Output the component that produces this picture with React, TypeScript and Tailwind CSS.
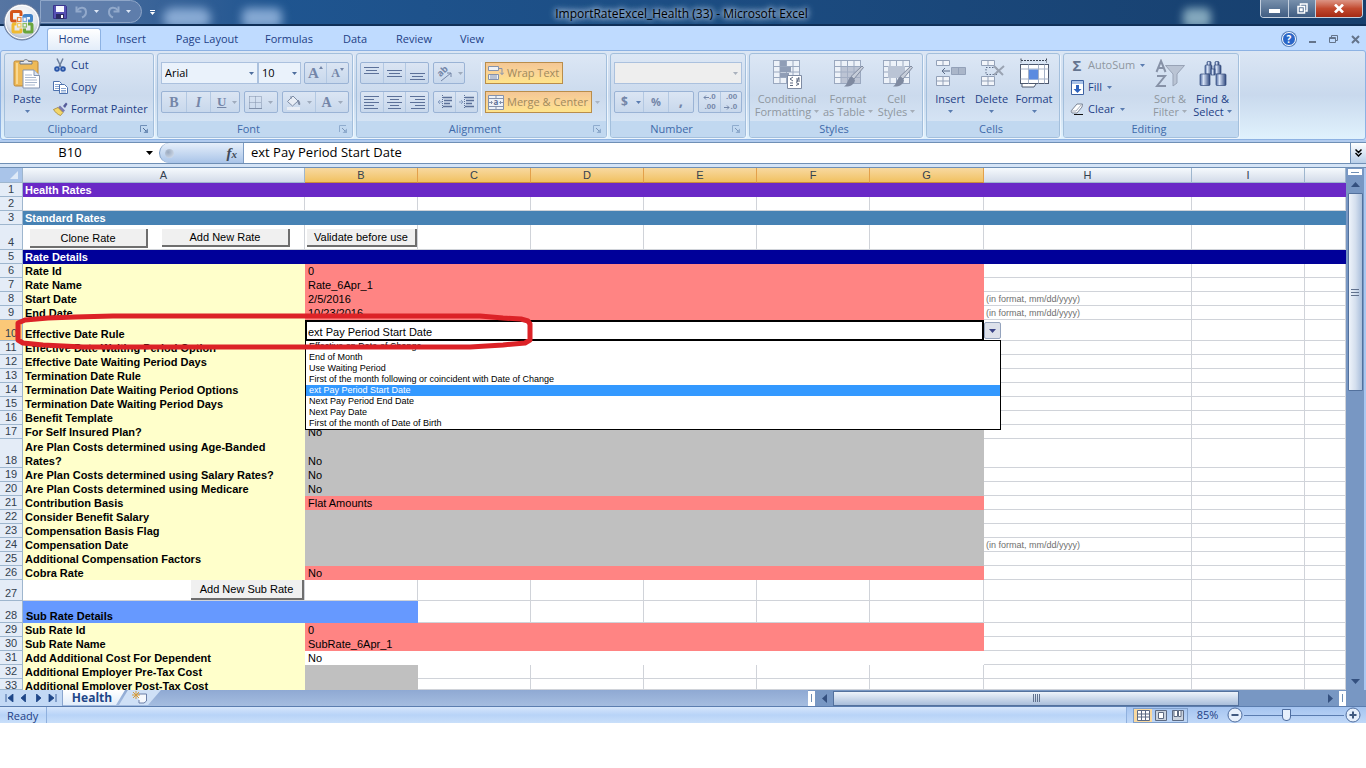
import type { ReactNode } from "react";
import clsx from "clsx";

type Row = {
    n: number
    kind: "banner" | "blank" | "field" | "sub" | "rateButtons" | "subButton" | "subHeader" | "active"
    h?: string
    label?: string
    value?: string
    fill?: string
    note?: string
}

const RED = "bg-[#ff8483]";
const GRAY = "bg-[#c0c0c0]";
const DATE_NOTE = "(in format, mm/dd/yyyy)";

const rows: Row[] = [
    { n: 1, kind: "banner", label: "Health Rates", fill: "bg-[#6a29c6]" },
    { n: 2, kind: "blank" },
    { n: 3, kind: "banner", label: "Standard Rates", fill: "bg-[#4782b4]" },
    { n: 4, kind: "rateButtons", h: "h-[25px]" },
    { n: 5, kind: "banner", label: "Rate Details", fill: "bg-[#000099]" },
    { n: 6, kind: "field", label: "Rate Id", value: "0", fill: RED },
    { n: 7, kind: "field", label: "Rate Name", value: "Rate_6Apr_1", fill: RED },
    { n: 8, kind: "field", label: "Start Date", value: "2/5/2016", fill: RED, note: DATE_NOTE },
    { n: 9, kind: "field", label: "End Date", value: "10/23/2016", fill: RED, note: DATE_NOTE },
    { n: 10, kind: "active", label: "Effective Date Rule", value: "ext Pay Period Start Date", h: "h-[21px]" },
    { n: 11, kind: "field", label: "Effective Date Waiting Period Option", fill: GRAY },
    { n: 12, kind: "field", label: "Effective Date Waiting Period Days", fill: GRAY },
    { n: 13, kind: "field", label: "Termination Date Rule", fill: GRAY },
    { n: 14, kind: "field", label: "Termination Date Waiting Period Options", fill: GRAY },
    { n: 15, kind: "field", label: "Termination Date Waiting Period Days", fill: GRAY },
    { n: 16, kind: "field", label: "Benefit Template", fill: GRAY },
    { n: 17, kind: "field", label: "For Self Insured Plan?", value: "No", fill: GRAY },
    { n: 18, kind: "field", label: "Are Plan Costs determined using Age-Banded Rates?", value: "No", fill: GRAY, h: "h-[29px]" },
    { n: 19, kind: "field", label: "Are Plan Costs determined using Salary Rates?", value: "No", fill: GRAY },
    { n: 20, kind: "field", label: "Are Plan Costs determined using Medicare", value: "No", fill: GRAY },
    { n: 21, kind: "field", label: "Contribution Basis", value: "Flat Amounts", fill: RED },
    { n: 22, kind: "field", label: "Consider Benefit Salary", fill: GRAY },
    { n: 23, kind: "field", label: "Compensation Basis Flag", fill: GRAY },
    { n: 24, kind: "field", label: "Compensation Date", fill: GRAY, note: DATE_NOTE },
    { n: 25, kind: "field", label: "Additional Compensation Factors", fill: GRAY },
    { n: 26, kind: "field", label: "Cobra Rate", value: "No", fill: RED },
    { n: 27, kind: "subButton", h: "h-[21px]" },
    { n: 28, kind: "subHeader", label: "Sub Rate Details", h: "h-[22px]" },
    { n: 29, kind: "field", label: "Sub Rate Id", value: "0", fill: RED },
    { n: 30, kind: "field", label: "Sub Rate Name", value: "SubRate_6Apr_1", fill: RED },
    { n: 31, kind: "field", label: "Add Additional Cost For Dependent", value: "No", fill: "bg-white" },
    { n: 32, kind: "sub", label: "Additional Employer Pre-Tax Cost" },
    { n: 33, kind: "sub", label: "Additional Employer Post-Tax Cost", h: "h-[11px]" },
];

const ruleOptions = [
    "Effective on Date of Change",
    "End of Month",
    "Use Waiting Period",
    "First of the month following or coincident with Date of Change",
    "ext Pay Period Start Date",
    "Next Pay Period End Date",
    "Next Pay Date",
    "First of the month of Date of Birth",
];

const columns = ["A", "B", "C", "D", "E", "F", "G", "H", "I", ""];

const tabs = [
    { label: "Home", width: "w-[54px]" },
    { label: "Insert", width: "w-[60px]" },
    { label: "Page Layout", width: "w-[92px]" },
    { label: "Formulas", width: "w-[72px]" },
    { label: "Data", width: "w-[60px]" },
    { label: "Review", width: "w-[58px]" },
    { label: "View", width: "w-[58px]" },
];

/* ---------- small shared pieces ---------- */

const Caret = ({ className = "text-[#5a7cb0]" }: { className?: string }) => (
    <svg viewBox="0 0 5 3" className={clsx("h-[3px] w-[5px] shrink-0", className)} aria-hidden="true">
        <path d="M0 0h5L2.500 3z" fill="currentColor" />
    </svg>
)

const Launcher = ({ faded }: { faded?: boolean }) => (
    <svg viewBox="0 0 9 9" className={clsx("h-[9px] w-[9px]", faded ? "opacity-60" : "")} fill="none" stroke="#6f8fb8" aria-hidden="true">
        <path d="M.5 7V.5H7" />
        <path d="M3 3l4 4" stroke="#4c6a96" />
        <path d="M8 3.500V8H3.500z" fill="#6f8fb8" stroke="none" />
    </svg>
)

const Group = ({ title, width, launcher, children }: { title: string; width: string; launcher?: "on" | "off"; children: ReactNode }) => (
    <section aria-label={title} className={clsx("flex h-[85px] shrink-0 flex-col overflow-hidden rounded-[3px] border border-[#a3bfdc] bg-linear-to-b from-[#dce7f5] via-[#cbdaed] to-[#dbe9f8] shadow-[1px_1px_0_#eef5fd]", width)}>
        <div className="flex-1 px-[3px]">{children}</div>
        <div className="flex h-4 items-center bg-[#c1d8f0] pr-1 text-[#3e6aaa]">
            <span className="flex-1 text-center">{title}</span>
            {launcher && <button aria-label={`${title} options`}><Launcher faded={launcher === "off"} /></button>}
        </div>
    </section>
)

const ButtonBar = ({ width, children }: { width: string; children: ReactNode }) => (
    <div className={clsx("flex h-[22px] divide-x divide-[#b3c8e2] rounded-[2px] border border-[#9ab3d5] bg-linear-to-b from-[#dbe5f3] to-[#c8d8ec]", width)}>
        {children}
    </div>
)

const Tool = ({ label, children, className }: { label: string; children: ReactNode; className?: string }) => (
    <button aria-label={label} className={clsx("flex flex-1 items-center justify-center gap-[6px] text-[#7486a8]", className)}>{children}</button>
)

const Lines = ({ rowsAt }: { rowsAt: [number, number, number][] }) => (
    <svg viewBox="0 0 15 14" className="h-[14px] w-[15px]" stroke="#5c7199" strokeWidth="1" aria-hidden="true">
        {rowsAt.map(([y, x1, x2]) => <path key={y} d={`M${x1} ${y}H${x2}`} />)}
    </svg>
)

const BigButton = ({ icon, lines, width, disabled }: { icon: ReactNode; lines: string[]; width: string; disabled?: boolean }) => (
    <button className={clsx("flex flex-col items-center", width, disabled ? "text-[#8f979f]" : "text-[#1e3f86]")}>
        <span className="flex h-9 items-center">{icon}</span>
        <span className="leading-[13px] whitespace-nowrap">{lines[0]}</span>
        <span className="flex h-[13px] items-center gap-[3px] leading-[13px] whitespace-nowrap">
            {lines[1]}
            <Caret className={disabled ? "text-[#a5adb8]" : "text-[#5a7cb0]"} />
        </span>
    </button>
)

const SmallButton = ({ icon, label, caret, disabled }: { icon: ReactNode; label: string; caret?: boolean; disabled?: boolean }) => (
    <button className={clsx("flex h-[22px] items-center gap-[3px] whitespace-nowrap", disabled ? "text-[#8f979f]" : "text-[#1e3f86]")}>
        <span className="flex w-4 justify-center">{icon}</span>
        {label}
        {caret && <span className="pl-[2px]"><Caret /></span>}
    </button>
)

/* ---------- icons ---------- */

const OfficeLogo = () => (
    <svg viewBox="0 0 38 38" className="h-[38px] w-[38px]" aria-hidden="true">
        <defs>
            <radialGradient id="orb" cx=".5" cy=".35" r=".65">
                <stop offset="0" stopColor="#ffffff" />
                <stop offset=".65" stopColor="#e1e5ed" />
                <stop offset="1" stopColor="#a4b0c4" />
            </radialGradient>
        </defs>
        <circle cx="19" cy="19" r="18" fill="url(#orb)" stroke="#64789b" />
        <circle cx="19" cy="19" r="16.500" fill="none" stroke="#fff" />
        <g fill="none" strokeWidth="3" strokeLinejoin="round">
            <path d="M13.500 18H10a1.500 1.500 0 0 1-1.500-1.500V10A1.500 1.500 0 0 1 10 8.500h6.500A1.500 1.500 0 0 1 18 10v3" stroke="#d4541b" />
            <path d="M21 15v-1.500a1 1 0 0 1 1-1h5.500a1 1 0 0 1 1 1V17a1 1 0 0 1-1 1H25" stroke="#4283c9" />
            <path d="M13.500 21H11a1 1 0 0 0-1 1v6a1 1 0 0 0 1 1h6a1 1 0 0 0 1-1v-2.500" stroke="#f0ba31" />
            <path d="M25 21h3a1 1 0 0 1 1 1v6a1 1 0 0 1-1 1h-5.500a1 1 0 0 1-1-1v-2.500" stroke="#6aa53c" />
        </g>
        <g fill="none" strokeWidth="1.200">
            <rect x="14.500" y="14.500" width="3.500" height="4" stroke="#e68139" />
            <rect x="20" y="14.500" width="3.500" height="4" stroke="#7ba7dc" />
            <rect x="14.500" y="20.500" width="3.500" height="3.500" stroke="#f0ca5f" />
            <rect x="20" y="20.500" width="3.500" height="3.500" stroke="#8dbe63" />
        </g>
    </svg>
)

const SaveIcon = () => (
    <svg viewBox="0 0 14 14" className="h-[14px] w-[14px]" aria-hidden="true">
        <path d="M.5.5h12l1 1v12H.5z" fill="#5650b4" stroke="#39358c" />
        <path d="M3 1h8v6H3z" fill="#f5f7ff" />
        <path d="M3 9h8v5H3z" fill="#2b2a63" />
        <path d="M8 10h2v3H8z" fill="#fff" />
    </svg>
)

const ArcArrow = ({ flip }: { flip?: boolean }) => (
    <svg viewBox="0 0 13 14" className={clsx("h-[14px] w-[13px]", flip && "-scale-x-100")} fill="none" stroke="#92a9cb" strokeWidth="2" aria-hidden="true">
        <path d="M2 5.500C5 1.500 10.500 2 11 6.500c.2 3-1.500 5-4 6" />
        <path d="M1.500 1.500v5h5" />
    </svg>
)

const PasteIcon = () => (
    <svg viewBox="0 0 28 32" className="h-8 w-7" aria-hidden="true">
        <rect x="1" y="3" width="24" height="25" rx="1.500" fill="#eeba57" stroke="#bb873a" />
        <path d="M3 5h2v21H3z" fill="#f9d892" />
        <path d="M7 6V3.500h3.500C11 1 15 1 15.500 3.500H19V6z" fill="#e4e8ee" stroke="#6d7684" />
        <path d="M10 12h11l5.500 5.500V30H10z" fill="#fff" stroke="#8595b0" />
        <path d="M21 12v5.500h5.500" fill="#dbe4f1" stroke="#8595b0" />
        <path d="M12 17h7M12 19.500h11M12 22h12M12 24.500h12M12 27h10" stroke="#a9b7cd" />
    </svg>
)

const CutIcon = () => (
    <svg viewBox="0 0 12 14" className="h-[14px] w-3" fill="none" aria-hidden="true">
        <path d="M3 .5l4 8.500M9 .5L5 9" stroke="#6d7f9c" strokeWidth="1.500" />
        <circle cx="3" cy="11" r="1.800" stroke="#2c57a8" strokeWidth="2" />
        <circle cx="9" cy="11" r="1.800" stroke="#2c57a8" strokeWidth="2" />
    </svg>
)

const CopyIcon = () => (
    <svg viewBox="0 0 15 13" className="h-[13px] w-[15px]" stroke="#4d72ae" aria-hidden="true">
        <path d="M.5.5h6l2 2v7h-8z" fill="#fff" />
        <path d="M2 3.500h4M2 5.500h4M2 7.500h4" stroke="#8aa7d3" />
        <path d="M6.500 3.500h5l3 3v6h-8z" fill="#fff" />
        <path d="M8 7.500h5M8 9.500h5M8 11h5" stroke="#8aa7d3" />
    </svg>
)

const PainterIcon = () => (
    <svg viewBox="0 0 15 14" className="h-[14px] w-[15px]" aria-hidden="true">
        <path d="M10 4l3-3.500 1.500 1.500L12 6z" fill="#555b99" />
        <path d="M7 3.500l5 5-2 2L5 5.500z" fill="#7b7bb1" />
        <path d="M5 5.500l5 5-2.500 3C4.500 12.500 2 10 .5 7.500z" fill="#f3d66a" stroke="#9b7c26" strokeWidth=".7" />
    </svg>
)

const SheetGrid = ({ children }: { children?: ReactNode }) => (
    <svg viewBox="0 0 32 32" className="h-8 w-8" fill="none" aria-hidden="true">
        <rect x="2.500" y="2.500" width="26" height="23" fill="#edf2f9" stroke="#9aa8bf" />
        <path d="M9 2.500v23M15.500 2.500v23M22 2.500v23M2.500 8.500h26M2.500 14h26M2.500 19.500h26" stroke="#9aa8bf" />
        {children}
    </svg>
)

const Brush = () => (
    <g>
        <path d="M30 8l1.500 1.500L22 21l-3-2.500z" fill="#c6cdd9" stroke="#808ba0" />
        <path d="M19 18.500l4 3.500c-1 5-5 7-11 6.500 4-2 3-7 7-10z" fill="#7f8aa0" />
    </g>
)

const InsertIcon = () => (
    <svg viewBox="0 0 32 32" className="h-8 w-8" fill="#f2f5fa" stroke="#93a1b8" aria-hidden="true">
        <path d="M2.500 2.500h13v5h-13zM9 2.500v5M2.500 18.500h13v9h-13zM9 18.500v9M2.500 23h13" />
        <path d="M17.500 9.500h14v7h-14zM24.500 9.500v7" fill="#aab6c9" />
        <path d="M16 13H8M11 10l-3 3 3 3" fill="none" stroke="#5c6c88" />
    </svg>
)

const DeleteIcon = () => (
    <svg viewBox="0 0 32 32" className="h-8 w-8" fill="#f2f5fa" stroke="#93a1b8" aria-hidden="true">
        <path d="M5.500 2.500h13v5h-13zM12 2.500v5M5.500 18.500h13v9h-13zM12 18.500v9M5.500 23h13" />
        <path d="M10 9.500h11v7H10z" fill="none" strokeDasharray="1.500 1.500" stroke="#5c6c88" />
        <path d="M18 8l9 9M28 8l-10 9" stroke="#9aa3b2" strokeWidth="2" />
    </svg>
)

const FormatIcon = () => (
    <svg viewBox="0 0 32 32" className="h-8 w-8" fill="none" aria-hidden="true">
        <path d="M3 2.500h25M3 .5v4M28.500.5v4" stroke="#3b4454" strokeDasharray="2 1" />
        <rect x="2.500" y="6.500" width="28" height="19" fill="#fff" stroke="#4e5a70" />
        <path d="M10.500 6.500v19M20.500 6.500v19M26.500 6.500v19M2.500 11h28M2.500 21h28" stroke="#a5b1c6" />
        <path d="M11 11.500h9v10h-9z" fill="#5b8be0" />
        <path d="M4 26v3h12l2-3" fill="#fff" stroke="#4e5a70" />
    </svg>
)

const BinocularsIcon = () => (
    <svg viewBox="0 0 28 26" className="h-[26px] w-7" aria-hidden="true">
        <defs>
            <linearGradient id="barrel">
                <stop offset="0" stopColor="#47649c" />
                <stop offset=".35" stopColor="#d6e2f6" />
                <stop offset="1" stopColor="#2b447a" />
            </linearGradient>
        </defs>
        <g fill="url(#barrel)" stroke="#334c7c" strokeWidth=".7">
            <rect x="8" y=".5" width="4" height="4" rx="1" />
            <rect x="16" y=".5" width="4" height="4" rx="1" />
            <rect x="6" y="4" width="7" height="9" rx="1" />
            <rect x="15" y="4" width="7" height="9" rx="1" />
            <rect x="12" y="8" width="4" height="6" />
            <rect x="1" y="13" width="10" height="11.500" rx="1" />
            <rect x="17" y="13" width="10" height="11.500" rx="1" />
        </g>
    </svg>
)

const SortIcon = () => (
    <svg viewBox="0 0 30 30" className="h-[30px] w-[30px]" fill="none" stroke="#8792a7" aria-hidden="true">
        <path d="M10.500 6.500h19L22 15v9l-4 3V15z" fill="#bac4d4" stroke="#98a3b6" />
        <path d="M1.500 13L6 2l4.500 11M3 9h6" strokeWidth="2" />
        <path d="M2 17h8L2 27h9" strokeWidth="2" />
    </svg>
)

/* ---------- title bar and tabs ---------- */

const TitleBar = () => (
    <header className="relative flex h-[26px] items-start overflow-hidden border-b-2 border-[#0f2f57] bg-linear-to-r from-[#5675a2] via-[#1f5590] via-20% to-[#173f6d]">
        <div className="ml-[40px] flex h-[23px] w-[102px] items-center gap-[8px] rounded-r-full border border-[#8fa6c8] bg-[#6c88b2]/70 pl-3">
            <button aria-label="Save"><SaveIcon /></button>
            <button aria-label="Undo" className="flex items-center gap-[6px]"><ArcArrow /><Caret className="text-[#dce6f5]" /></button>
            <button aria-label="Redo" className="flex items-center gap-[6px]"><ArcArrow flip /><Caret className="text-[#dce6f5]" /></button>
        </div>
        <button aria-label="Customize toolbar" className="ml-2 flex h-6 flex-col items-center justify-center gap-[1px]">
            <span className="h-px w-[5px] bg-white" />
            <Caret className="text-white" />
        </button>
        {/* desktop icons glowing through the glass */}
        <div className="absolute top-2 left-[163px] h-5 w-12 rounded-full bg-[#9dbde3]/80 blur-[5px]" />
        <div className="absolute top-2 left-[242px] h-5 w-10 rounded-md bg-[#9dbde3]/80 blur-[5px]" />
        <div className="absolute top-2 right-[155px] h-5 w-7 rounded-md bg-[#9dc0cf]/80 blur-[4px]" />
        <h1 className="flex-1 pt-[5px] pr-[52px] text-center text-[12px] leading-[18px] text-black [text-shadow:0_0_5px_#c5d6ec,0_0_7px_#b9cde6,0_0_9px_#9db8da]">
            ImportRateExcel_Health (33) - Microsoft Excel
        </h1>
        <div className="mr-[3px] flex h-[18px] divide-x divide-[#c3cfde] overflow-hidden rounded-b-[4px] border border-t-0 border-[#c3cfde]">
            <button aria-label="Minimize" className="flex w-7 items-center justify-center bg-linear-to-b from-[#7890ac] to-[#405d82]">
                <span className="mt-1 h-1 w-[11px] bg-white" />
            </button>
            <button aria-label="Restore" className="flex w-[27px] items-center justify-center bg-linear-to-b from-[#7890ac] to-[#405d82]">
                <svg viewBox="0 0 11 11" className="h-[11px] w-[11px]" fill="none" stroke="#fff" strokeWidth="1.500" aria-hidden="true">
                    <path d="M3.500 2.500V1H10v7H8.500M1 3.500h6.500V10H1zM3.500 6h1.500v1.500H3.500z" />
                </svg>
            </button>
            <button aria-label="Close" className="flex w-[46px] items-center justify-center bg-linear-to-b from-[#dc9484] via-[#c24a2f] to-[#a52a14]">
                <svg viewBox="0 0 10 9" className="h-[9px] w-[10px]" stroke="#fff" strokeWidth="2.600" aria-hidden="true"><path d="M1 .5l8 8M9 .5l-8 8" /></svg>
            </button>
        </div>
    </header>
)

const TabRow = () => (
    <nav className="flex h-[24px] items-end bg-[#bfdbff] pr-1 pl-[47px]" aria-label="Ribbon tabs">
        {tabs.map(({ label, width }) => (
            <button
                key={label}
                className={clsx("h-[22px] whitespace-nowrap text-[#1e3f86]", width, label === "Home" && "rounded-t-[3px] border border-b-0 border-[#8db2e3] bg-linear-to-b from-white to-[#e3edf9]")}
            >
                {label}
            </button>
        ))}
        <div className="ml-auto flex h-[22px] items-center gap-[13px] pr-[2px]">
            <button aria-label="Help" className="flex h-[14px] w-[14px] items-center justify-center rounded-full border border-white bg-[#2a66c8] text-[10px] font-bold text-white ring-1 ring-[#5b83bd]">?</button>
            <button aria-label="Minimize workbook"><span className="mt-[6px] block h-[2px] w-[7px] bg-[#64748b]" /></button>
            <button aria-label="Restore workbook">
                <svg viewBox="0 0 9 8" className="h-2 w-[9px]" fill="none" stroke="#64748b" aria-hidden="true"><path d="M2.500 2V.5h6v5H7M.5 2.500h6v5h-6zM.5 3.500h6" /></svg>
            </button>
            <button aria-label="Close workbook">
                <svg viewBox="0 0 9 9" className="h-[9px] w-[9px]" stroke="#64748b" strokeWidth="2" aria-hidden="true"><path d="M1 1l7 7M8 1L1 8" /></svg>
            </button>
        </div>
    </nav>
)

/* ---------- ribbon ---------- */

const selectBase = "h-[22px] appearance-none border border-[#abc1de] pl-[3px] text-[11px] text-black";

const PickList = ({ label, value, width, muted }: { label: string; value: string; width: string; muted?: boolean }) => (
    <div className={clsx("grid items-center", width)}>
        <select aria-label={label} className={clsx(selectBase, "col-start-1 row-start-1 w-full", muted ? "bg-[#eeeeee]" : "bg-[#eaf2fb]")}>
            <option>{value}</option>
        </select>
        <span className="pointer-events-none col-start-1 row-start-1 mr-1 justify-self-end">
            <Caret className={muted ? "text-[#a9b1bd]" : "text-[#4d6d9d]"} />
        </span>
    </div>
)

const activeTool = "flex h-[22px] items-center gap-[3px] border border-[#b98d4b] bg-linear-to-b from-[#f4c795] via-[#fbd596] to-[#fee48a] pl-[2px] whitespace-nowrap";

const Ribbon = () => (
    <div className="flex h-[90px] gap-[3px] rounded-[3px] border border-[#8db2e3] bg-linear-to-b from-[#dbe6f4] via-[#c9d9ed] to-[#e0f2fd] px-[3px] pt-[2px]">
        <Group title="Clipboard" width="w-[150px]" launcher="on">
            <div className="flex">
                <div className="w-[40px] pt-[2px]">
                    <BigButton icon={<PasteIcon />} lines={["Paste", ""]} width="w-[38px]" />
                </div>
                <div className="flex flex-col pl-1">
                    <SmallButton icon={<CutIcon />} label="Cut" />
                    <SmallButton icon={<CopyIcon />} label="Copy" />
                    <SmallButton icon={<PainterIcon />} label="Format Painter" />
                </div>
            </div>
        </Group>

        <Group title="Font" width="w-[196px]" launcher="off">
            <div className="flex flex-col gap-[7px] pt-[8px]">
                <div className="flex">
                    <PickList label="Font" value="Arial" width="w-[97px]" />
                    <PickList label="Font size" value="10" width="w-[43px]" />
                    <div className="pl-[3px]">
                        <ButtonBar width="w-[45px]">
                            <Tool label="Grow font"><span className="flex font-[Liberation_Serif] text-[15px] font-bold">A<svg viewBox="0 0 4 3" className="mt-1 h-[3px] w-1" aria-hidden="true"><path d="M0 3h4L2 0z" fill="currentColor" /></svg></span></Tool>
                            <Tool label="Shrink font"><span className="flex font-[Liberation_Serif] text-[12px] font-bold">A<svg viewBox="0 0 4 3" className="mt-1 h-[3px] w-1" aria-hidden="true"><path d="M0 0h4L2 3z" fill="currentColor" /></svg></span></Tool>
                        </ButtonBar>
                    </div>
                </div>
                <div className="flex gap-1 font-[Liberation_Serif]">
                    <ButtonBar width="w-[79px]">
                        <Tool label="Bold"><b className="text-[14px]">B</b></Tool>
                        <Tool label="Italic"><i className="text-[14px] font-bold">I</i></Tool>
                        <Tool label="Underline" className="pl-1"><b className="text-[13px] underline">U</b><Caret className="text-[#9fabbd]" /></Tool>
                    </ButtonBar>
                    <ButtonBar width="w-[34px]">
                        <Tool label="Borders">
                            <svg viewBox="0 0 13 13" className="h-[13px] w-[13px]" stroke="#8090aa" fill="none" aria-hidden="true">
                                <path d="M.5.5h12v11M.5.5v11M6.500.5v11M.5 6.500h12" strokeDasharray="1 1" />
                                <path d="M0 12.500h13" />
                            </svg>
                            <Caret className="text-[#9fabbd]" />
                        </Tool>
                    </ButtonBar>
                    <ButtonBar width="w-[67px]">
                        <Tool label="Fill color">
                            <svg viewBox="0 0 15 15" className="h-[15px] w-[15px]" fill="#e8edf5" stroke="#7e8ca5" aria-hidden="true">
                                <path d="M1.500 6.500L7 1l5 5-5.500 5zM5 4V1" />
                                <path d="M12 5c2 2 2 4 1.500 5C12 9 12 7 12 5z" fill="#7e8ca5" />
                                <path d="M1 12h13v3H1z" stroke="none" />
                            </svg>
                            <Caret className="text-[#9fabbd]" />
                        </Tool>
                        <Tool label="Font color"><b className="text-[14px]">A</b><Caret className="text-[#9fabbd]" /></Tool>
                    </ButtonBar>
                </div>
            </div>
        </Group>

        <Group title="Alignment" width="w-[251px]" launcher="off">
            <div className="flex gap-[3px] pt-[8px]">
                <div className="flex w-[118px] flex-col gap-[7px]">
                    <div className="flex gap-1">
                        <ButtonBar width="w-[69px]">
                            <Tool label="Top align"><Lines rowsAt={[[1.5, 0, 15], [4.5, 2, 13], [7.5, 0, 15]]} /></Tool>
                            <Tool label="Middle align"><Lines rowsAt={[[4.5, 0, 15], [7.5, 2, 13], [10.5, 0, 15]]} /></Tool>
                            <Tool label="Bottom align"><Lines rowsAt={[[7.5, 0, 15], [10.5, 2, 13], [13.5, 0, 15]]} /></Tool>
                        </ButtonBar>
                        <ButtonBar width="w-[32px]">
                            <Tool label="Orientation" className="gap-[2px]">
                                <svg viewBox="0 0 17 17" className="h-[17px] w-[17px] overflow-visible" aria-hidden="true">
                                    <text x="3" y="10" fontSize="9" fontWeight="bold" fill="#7486a8" transform="rotate(-45 7 8)">ab</text>
                                    <path d="M6 16L16 8M16 12V8h-4" fill="none" stroke="#7486a8" />
                                </svg>
                                <Caret className="text-[#9fabbd]" />
                            </Tool>
                        </ButtonBar>
                    </div>
                    <div className="flex gap-1">
                        <ButtonBar width="w-[69px]">
                            <Tool label="Align left"><Lines rowsAt={[[1.5, 0, 15], [4.5, 0, 10], [7.5, 0, 15], [10.5, 0, 10], [13.5, 0, 14]]} /></Tool>
                            <Tool label="Center"><Lines rowsAt={[[1.5, 0, 15], [4.5, 3, 12], [7.5, 0, 15], [10.5, 3, 12], [13.5, 1, 14]]} /></Tool>
                            <Tool label="Align right"><Lines rowsAt={[[1.5, 0, 15], [4.5, 5, 15], [7.5, 0, 15], [10.5, 5, 15], [13.5, 1, 15]]} /></Tool>
                        </ButtonBar>
                        <ButtonBar width="w-[45px]">
                            <Tool label="Decrease indent">
                                <svg viewBox="0 0 16 14" className="h-[14px] w-4" fill="none" stroke="#5c7199" aria-hidden="true">
                                    <path d="M6 2.500h9M7 5.500h8M7 8.500h6M6 11.500h9" strokeWidth="1.500" /><path d="M5.500 0v14" strokeDasharray="1 1" /><path d="M5 7H1M3 5L1 7l2 2" stroke="#8aa0c3" />
                                </svg>
                            </Tool>
                            <Tool label="Increase indent">
                                <svg viewBox="0 0 16 14" className="h-[14px] w-4" fill="none" stroke="#5c7199" aria-hidden="true">
                                    <path d="M6 2.500h9M7 5.500h8M7 8.500h6M6 11.500h9" strokeWidth="1.500" /><path d="M5.500 0v14" strokeDasharray="1 1" /><path d="M0 7h4M2 5l2 2-2 2" stroke="#8aa0c3" />
                                </svg>
                            </Tool>
                        </ButtonBar>
                    </div>
                </div>
                <div className="h-[54px] w-px bg-[#f2f7fd]" />
                <div className="flex flex-col gap-[7px] text-[#a08a5c]">
                    <button className={clsx(activeTool, "w-[78px]")}>
                        <svg viewBox="0 0 16 16" className="h-4 w-4 shrink-0" fill="#eef2f8" stroke="#8592ac" aria-hidden="true">
                            <path d="M.5 1.500h10v4H.5zM.5 9.500h10v5H.5z" /><path d="M2 11h7M2 13h7M10 3.500h4v6l-2-2m2 2l2-2" fill="none" />
                        </svg>
                        Wrap Text
                    </button>
                    <div className="flex items-center gap-[3px]">
                        <button className={clsx(activeTool, "w-[107px]")}>
                            <svg viewBox="0 0 16 15" className="h-[15px] w-4 shrink-0" fill="#eef2f8" stroke="#8592ac" aria-hidden="true">
                                <path d="M.5.5h15v14H.5zM.5 3.500h15M.5 11.500h15M8 .5v3M8 11.500v3" /><path d="M1 7.500h3M15 7.500h-3M3 6l1.500 1.500L3 9M13 6l-1.500 1.500L13 9" fill="none" />
                                <text x="5.500" y="10" fontSize="8" fontWeight="bold" fill="#5c6f96" stroke="none">a</text>
                            </svg>
                            Merge &amp; Center
                        </button>
                        <Caret className="text-[#a9b4c4]" />
                    </div>
                </div>
            </div>
        </Group>

        <Group title="Number" width="w-[136px]" launcher="off">
            <div className="flex flex-col gap-[7px] pt-[8px]">
                <PickList label="Number format" value="" width="w-[128px]" muted />
                <div className="flex gap-1">
                    <ButtonBar width="w-[80px]">
                        <Tool label="Accounting format" className="gap-[8px] pl-1"><b className="text-[12px]">$</b><Caret /></Tool>
                        <Tool label="Percent"><b>%</b></Tool>
                        <Tool label="Comma style"><b className="pb-1 text-[15px]">,</b></Tool>
                    </ButtonBar>
                    <ButtonBar width="w-[44px]">
                        <Tool label="Increase decimal">
                            <span className="flex flex-col items-end font-[Liberation_Sans] text-[8px] leading-[10px] font-bold">
                                <span className="flex items-center">
                                    <svg viewBox="0 0 6 5" className="h-[5px] w-[6px]" fill="none" stroke="currentColor" aria-hidden="true"><path d="M6 2.500H1M3 .5l-2 2 2 2" /></svg>.0
                                </span>
                                <span>.00</span>
                            </span>
                        </Tool>
                        <Tool label="Decrease decimal">
                            <span className="flex flex-col items-end font-[Liberation_Sans] text-[8px] leading-[10px] font-bold">
                                <span>.00</span>
                                <span className="flex items-center">
                                    <svg viewBox="0 0 6 5" className="h-[5px] w-[6px]" fill="none" stroke="currentColor" aria-hidden="true"><path d="M0 2.500h5M3 .5l2 2-2 2" /></svg>.0
                                </span>
                            </span>
                        </Tool>
                    </ButtonBar>
                </div>
            </div>
        </Group>

        <Group title="Styles" width="w-[174px]">
            <div className="flex pt-[2px]">
                <BigButton disabled width="w-[68px]" lines={["Conditional", "Formatting"]} icon={
                    <SheetGrid><path d="M9 3h6v5H9zM9 9h11v5H9zM9 15h9v4H9z" fill="#8f9db6" /><path d="M16.500 17.500h14v13h-14z" fill="#fff" stroke="#7e8ba3" /><path d="M22 19l-3 2 3 2M19 25h3M19 27.500h3M25 21h4M25 23h4M28 19l-2 5M25 24.500l3 1.500-3 1.500" stroke="#5c6980" /></SheetGrid>
                } />
                <BigButton disabled width="w-[54px]" lines={["Format", "as Table"]} icon={<SheetGrid><path d="M9 9h19v16H9z" fill="#a6b1c5" fillOpacity=".7" /><Brush /></SheetGrid>} />
                <BigButton disabled width="w-[43px]" lines={["Cell", "Styles"]} icon={<SheetGrid><path d="M7 8h17v12H7z" fill="#bac4d5" /><Brush /></SheetGrid>} />
            </div>
        </Group>

        <Group title="Cells" width="w-[134px]">
            <div className="flex pt-[2px]">
                <BigButton width="w-[40px]" lines={["Insert", ""]} icon={<InsertIcon />} />
                <BigButton width="w-[43px]" lines={["Delete", ""]} icon={<DeleteIcon />} />
                <BigButton width="w-[42px]" lines={["Format", ""]} icon={<FormatIcon />} />
            </div>
        </Group>

        <Group title="Editing" width="w-[176px]">
            <div className="flex">
                <div className="flex w-[82px] flex-col pl-[2px]">
                    <SmallButton disabled caret label="AutoSum" icon={<span className="text-[15px] font-bold text-[#64748f]">Σ</span>} />
                    <SmallButton caret label="Fill" icon={
                        <svg viewBox="0 0 13 15" className="h-[15px] w-[13px]" aria-hidden="true"><path d="M.5.5h12v14H.5z" fill="#fff" stroke="#3d62a3" /><path d="M1 1h11v3H1z" fill="#a9c2e8" /><path d="M5 5h3v4h2.500l-4 4-4-4H5z" fill="#2d62bd" /></svg>
                    } />
                    <SmallButton caret label="Clear" icon={
                        <svg viewBox="0 0 14 12" className="h-3 w-[14px]" aria-hidden="true"><path d="M1 8l6-7h5.500L12 4l-5 6H2z" fill="#fff" stroke="#7b8596" /><path d="M1 8h5l6-7" fill="none" stroke="#a3acbb" /><path d="M4 11.500h9" stroke="#111" /></svg>
                    } />
                </div>
                <div className="flex pt-[2px]">
                    <BigButton disabled width="w-[42px]" lines={["Sort &", "Filter"]} icon={<SortIcon />} />
                    <BigButton width="w-[43px]" lines={["Find &", "Select"]} icon={<BinocularsIcon />} />
                </div>
            </div>
        </Group>
    </div>
)

/* ---------- formula bar ---------- */

const FormulaBar = () => (
    <div className="bg-[#b1cbee] pt-[2px]">
        <div className="flex h-[22px] border-y border-[#6f8fb5] bg-white text-[13px] text-black">
            <input aria-label="Name box" defaultValue="B10" className="w-[140px] text-center" />
            <button aria-label="Names" className="flex w-[19px] items-center justify-center">
                <svg viewBox="0 0 7 4" className="h-1 w-[7px]" aria-hidden="true"><path d="M0 0h7L3.500 4z" /></svg>
            </button>
            <div className="flex w-[85px] items-center justify-between rounded-l-full border-x border-[#7d9cc4] bg-linear-to-b from-[#e6effa] to-[#a9c4e8] pr-[6px] pl-[5px]">
                <span className="h-[9px] w-[9px] rounded-full bg-radial-[at_35%_35%] from-[#9aa9bf] to-[#dbe5f2]" />
                <button aria-label="Insert function" className="font-[Liberation_Serif] text-[15px] font-bold text-[#414a58] italic">f<span className="text-[11px]">x</span></button>
            </div>
            <input aria-label="Formula" defaultValue="ext Pay Period Start Date" className="min-w-0 flex-1 pl-[7px]" />
            <button aria-label="Expand formula bar" className="flex w-[16px] items-center justify-center border-l border-[#6f8fb5] bg-linear-to-b from-white to-[#b9cfe9]">
                <svg viewBox="0 0 7 8" className="h-2 w-[7px]" fill="none" stroke="#000" strokeWidth="1.500" aria-hidden="true"><path d="M.5.5l3 3 3-3M.5 4l3 3 3-3" /></svg>
            </button>
        </div>
        <div className="h-1 border-b border-[#6f8fb5] bg-[#d5e4f6]" />
    </div>
)

/* ---------- sheet ---------- */

const gridCell = "border-r border-b border-[#d0d3d9] p-0 bg-white";

const Blanks = ({ count }: { count: number }) => (
    <>{Array.from({ length: count }, (_, i) => <td key={i} className={gridCell} />)}</>
)

const SheetButton = ({ children, className }: { children: ReactNode; className: string }) => (
    <button className={clsx("shrink-0 border-r-2 border-b-2 border-[#6e6e6e] bg-[#f0f0f0] text-[11px] leading-[14px] whitespace-nowrap text-black", className)}>{children}</button>
)

const LabelCell = ({ children }: { children: ReactNode }) => (
    <td className="bg-[#ffffcb] py-0 pr-0 pl-[2px] align-bottom font-bold">{children}</td>
)

const ActiveCells = ({ row }: { row: Row }) => (
    <>
        <LabelCell><label htmlFor="rule">{row.label}</label></LabelCell>
        <td colSpan={6} className="relative border-2 border-black bg-white p-0 align-bottom">
            <select id="rule" defaultValue={row.value} className="block h-[17px] w-full appearance-none pt-1 pl-px leading-[13px]">
                {ruleOptions.map((option) => <option key={option}>{option}</option>)}
            </select>
            <button aria-label="Open list" className="absolute top-0 -right-[19px] flex h-[17px] w-[17px] items-center justify-center rounded-[2px] border border-[#94a3bd] bg-[#dde1ea]">
                <svg viewBox="0 0 7 4" className="h-1 w-[7px]" aria-hidden="true"><path d="M0 0h7L3.500 4z" fill="#3a4386" /></svg>
            </button>
            <ul role="listbox" aria-label="Effective Date Rule" className="absolute top-[18px] -right-[19px] -left-[2px] z-10 border border-black bg-white text-[9px] leading-[11px]">
                {ruleOptions.map((option) => (
                    <li
                        key={option}
                        role="option"
                        aria-selected={option === row.value}
                        className={clsx("h-[11px] pl-[3px]", option === row.value && "bg-[#3399ff] text-white")}
                    >
                        {option}
                    </li>
                ))}
            </ul>
        </td>
        <Blanks count={3} />
    </>
)

const RowCells = ({ row }: { row: Row }) => {
    if (row.kind === "banner") {
        return <td colSpan={10} className={clsx("py-0 pr-0 pl-[2px] align-bottom font-bold text-white", row.fill)}>{row.label}</td>
    }
    if (row.kind === "blank") return <Blanks count={10} />
    if (row.kind === "active") return <ActiveCells row={row} />
    if (row.kind === "rateButtons") {
        return (
            <>
                <td className={clsx(gridCell, "align-top")}>
                    <div className="flex items-start gap-[14px] pt-1 pl-[7px]">
                        <SheetButton className="h-[19px] w-[118px]">Clone Rate</SheetButton>
                        <SheetButton className="h-[18px] w-[128px]">Add New Rate</SheetButton>
                    </div>
                </td>
                <td className={clsx(gridCell, "align-top")}>
                    <div className="flex pt-1 pl-[2px]"><SheetButton className="h-[18px] w-[110px]">Validate before use</SheetButton></div>
                </td>
                <Blanks count={8} />
            </>
        )
    }
    if (row.kind === "subButton") {
        return (
            <>
                <td className={clsx(gridCell, "align-top")}>
                    <div className="flex justify-end"><SheetButton className="h-[20px] w-[113px]">Add New Sub Rate</SheetButton></div>
                </td>
                <Blanks count={9} />
            </>
        )
    }
    if (row.kind === "subHeader") {
        return (
            <>
                <td colSpan={2} className="bg-[#6699ff] py-0 pr-0 pl-[3px] align-bottom font-bold">{row.label}</td>
                <Blanks count={8} />
            </>
        )
    }
    if (row.kind === "sub") {
        return (
            <>
                <LabelCell><div className={clsx("overflow-hidden", row.h)}>{row.label}</div></LabelCell>
                <td className={clsx("p-0", GRAY)} />
                <Blanks count={8} />
            </>
        )
    }
    return (
        <>
            <LabelCell>{row.label}</LabelCell>
            <td colSpan={6} className={clsx("py-0 pr-0 pl-[3px] align-bottom", row.fill)}>{row.value}</td>
            <td className={clsx(gridCell, "pl-[2px] align-bottom text-[9px] leading-[11px] text-[#6f6f6f]")}>{row.note}</td>
            <Blanks count={2} />
        </>
    )
}

const Sheet = () => (
    <div className="relative min-w-0 flex-1">
        <table className="w-full table-fixed border-separate border-spacing-0 font-[Liberation_Sans] text-[11px] leading-[14px] text-black">
            <colgroup>
                <col className="w-[23px]" />
                <col className="w-[282px]" />
                <col className="w-[113px]" />
                <col className="w-[113px]" />
                <col className="w-[113px]" />
                <col className="w-[113px]" />
                <col className="w-[113px]" />
                <col className="w-[114px]" />
                <col className="w-[208px]" />
                <col className="w-[113px]" />
                <col />
            </colgroup>
            <thead>
                <tr className="h-[15px]">
                    <th className="border-r border-b border-[#9eb6ce] bg-[#a9c4e9] p-0">
                        <svg viewBox="0 0 8 8" className="mr-1 ml-auto h-2 w-2" aria-hidden="true"><path d="M8 0v8H0z" fill="#dfeaf8" /></svg>
                    </th>
                    {columns.map((name, i) => (
                        <th
                            key={i}
                            className={clsx(
                                "border-r border-b p-0 text-[11px] leading-[14px] font-normal text-[#33414f]",
                                i > 0 && i < 7
                                    ? "border-r-[#e3a04a] border-b-[#c98b3b] bg-linear-to-b from-[#f8d9a0] to-[#f1c15f]"
                                    : "border-[#9eb6ce] bg-linear-to-b from-[#f6fafd] to-[#d3dbe9]",
                            )}
                        >
                            {name}
                        </th>
                    ))}
                </tr>
            </thead>
            <tbody>
                {rows.map((row) => (
                    <tr key={row.n} className={row.h ?? "h-[14px]"}>
                        <th
                            className={clsx(
                                "border-r border-b border-[#9eb6ce] p-0 align-bottom leading-[13px] font-normal text-[#33414f]",
                                row.n === 10 ? "bg-[#fbc878]" : "bg-[#e4ecf7]",
                            )}
                        >
                            {row.n === 33 ? <div className="h-[10px] overflow-hidden">33</div> : row.n}
                        </th>
                        <RowCells row={row} />
                    </tr>
                ))}
            </tbody>
        </table>
        {/* hand-drawn marker around the rule */}
        <svg viewBox="0 0 524 40" className="pointer-events-none absolute top-[144px] left-[13px] z-20 h-10 w-[524px]" fill="none" stroke="#dc2227" strokeWidth="5" strokeLinejoin="round" aria-hidden="true">
            <path d="M5 11L12 8L35 6L62 5L100 4H467L490 6L508 7L515 9L517 12V28L512 31L490 33L457 35H70L30 33L10 31L5 28Z" />
        </svg>
    </div>
)

const VerticalScroll = () => (
    <div className="flex w-5 shrink-0 flex-col items-center border-r-2 border-[#a9c7f0] bg-[#7897c3]">
        <span className="my-px flex h-[6px] w-[14px] items-center justify-center bg-white"><span className="h-px w-2 bg-[#6f8fb5]" /></span>
        <button aria-label="Scroll up" className="flex h-[17px] items-center">
            <svg viewBox="0 0 9 5" className="h-[5px] w-[9px]" aria-hidden="true"><path d="M0 5h9L4.500 0z" fill="#34507f" /></svg>
        </button>
        <div className="flex h-[198px] w-[15px] flex-col items-center justify-center gap-[2px] rounded-[1px] border border-[#53719d] bg-linear-to-r from-[#eef3fa] via-[#d4dfee] to-[#a9bedb]">
            {[0, 1, 2].map((i) => <span key={i} className="h-px w-2 bg-[#60718d]" />)}
        </div>
        <button aria-label="Scroll down" className="mt-auto flex h-[17px] items-center">
            <svg viewBox="0 0 9 5" className="h-[5px] w-[9px]" aria-hidden="true"><path d="M0 0h9L4.500 5z" fill="#34507f" /></svg>
        </button>
    </div>
)

/* ---------- bottom bars ---------- */

const navShapes = [
    { label: "First sheet", d: "M1 0v8M8 0L3 4l5 4z" },
    { label: "Previous sheet", d: "M6.500 0L2 4l4.500 4z" },
    { label: "Next sheet", d: "M2.500 0L7 4 2.500 8z" },
    { label: "Last sheet", d: "M8 0v8M1 0l5 4-5 4z" },
]

const SheetBar = () => (
    <div className="flex h-[17px] border-b border-[#5b7daf] bg-linear-to-b from-[#8fa9d3] to-[#a5bde0]">
        <div className="flex w-[63px] items-center justify-around border-r border-[#8aa6cf] bg-[#c3d9f5] px-[2px]">
            {navShapes.map(({ label, d }) => (
                <button key={label} aria-label={label}>
                    <svg viewBox="0 0 9 8" className="h-2 w-[9px]" fill="#1e4688" stroke="#1e4688" aria-hidden="true"><path d={d} strokeWidth=".8" /></svg>
                </button>
            ))}
        </div>
        <button className="h-[15px] w-[62px] bg-linear-to-b from-white to-[#e2edfa] pr-1 text-[12px] leading-[15px] font-bold text-[#1e4688] [clip-path:polygon(0_0,100%_0,calc(100%-9px)_100%,0_100%)]">Health</button>
        <button aria-label="Insert worksheet" className="-ml-[6px] flex h-[15px] w-[42px] items-center justify-center bg-[#cfe0f6] [clip-path:polygon(9px_0,100%_0,calc(100%-13px)_100%,0_100%)]">
            <svg viewBox="0 0 16 13" className="h-[13px] w-4" fill="none" aria-hidden="true">
                <path d="M5 3h9.500v7L12 12H7V9" fill="#f5f8fd" stroke="#6b7fa8" />
                <path d="M4 0v8M0 4h8M1 1l6 6M7 1L1 7" stroke="#d59b3a" />
            </svg>
        </button>
        <div className="ml-auto flex w-[558px] items-center bg-[#7897c3]">
            <span className="flex h-[15px] w-[7px] items-center justify-center bg-white"><span className="h-2 w-px bg-[#6f8fb5]" /></span>
            <button aria-label="Scroll left" className="flex w-[18px] justify-center">
                <svg viewBox="0 0 5 9" className="h-[9px] w-[5px]" aria-hidden="true"><path d="M5 0v9L0 4.500z" fill="#34507f" /></svg>
            </button>
            <div className="flex h-[15px] w-[406px] items-center justify-center gap-[1px] border border-[#53719d] bg-linear-to-b from-[#edf3fa] to-[#a9bedb]">
                {[0, 1, 2, 3].map((i) => <span key={i} className="h-2 w-px bg-[#60718d]" />)}
            </div>
            <button aria-label="Scroll right" className="ml-auto flex w-[18px] justify-center">
                <svg viewBox="0 0 5 9" className="h-[9px] w-[5px]" aria-hidden="true"><path d="M0 0v9l5-4.500z" fill="#34507f" /></svg>
            </button>
            <span className="flex h-[15px] w-[7px] items-center justify-center bg-white"><span className="h-2 w-px bg-[#6f8fb5]" /></span>
            <span className="w-5 border-r-2 border-[#a9c7f0]" />
        </div>
    </div>
)

const ZoomButton = ({ label, d }: { label: string; d: string }) => (
    <button aria-label={label}>
        <svg viewBox="0 0 16 16" className="h-4 w-4" fill="#e6effb" stroke="#4e6d9f" aria-hidden="true">
            <circle cx="8" cy="8" r="7" /><path d={d} strokeWidth="2" stroke="#40597f" />
        </svg>
    </button>
)

const StatusBar = () => (
    <footer className="flex h-[16px] items-center overflow-hidden bg-linear-to-b from-[#d6e6fb] via-[#b8d3f7] to-[#c9dffa] text-[#1e3f86]">
        <span className="w-[47px] border-r border-[#8fb0de] pt-[2px] pl-[7px] leading-[14px]">Ready</span>
        <div className="ml-auto flex h-full items-center border-l border-[#8fb0de] bg-linear-to-b from-[#a5c4f0] to-[#c0d8f8] pl-[6px]">
            <div className="flex h-[15px] border border-[#7f9fcb]">
                <button aria-label="Normal view" className="flex w-[18px] items-center justify-center bg-[#f9d9a0]">
                    <svg viewBox="0 0 13 11" className="h-[11px] w-[13px]" fill="#fff" stroke="#5d6a82" aria-hidden="true"><path d="M.5.5h12v10H.5zM4.500.5v10M8.500.5v10M.5 4h12M.5 7h12" /></svg>
                </button>
                <button aria-label="Page layout view" className="flex w-[17px] items-center justify-center">
                    <svg viewBox="0 0 12 11" className="h-[11px] w-3" fill="#cbd3de" stroke="#5d6a82" aria-hidden="true"><path d="M.5.5h11v10H.5z" /><path d="M3.500 2.500h5v6h-5z" fill="#fff" /></svg>
                </button>
                <button aria-label="Page break preview" className="flex w-[18px] items-center justify-center">
                    <svg viewBox="0 0 12 11" className="h-[11px] w-3" fill="#cbd3de" stroke="#5d6a82" aria-hidden="true"><path d="M.5.5h11v10H.5z" /><path d="M2 .5h3.500v6H2zM6.500.5H9v6H6.500z" fill="#fff" /></svg>
                </button>
            </div>
            <span className="w-[39px] text-center">85%</span>
            <ZoomButton label="Zoom out" d="M4.500 8h7" />
            <input
                type="range"
                aria-label="Zoom"
                min={10}
                max={100}
                defaultValue={48}
                className="mx-px h-3 w-[100px] appearance-none bg-[linear-gradient(#5a7cb0,#5a7cb0)] bg-size-[100%_1px] bg-center bg-no-repeat [&::-webkit-slider-thumb]:h-[12px] [&::-webkit-slider-thumb]:w-[9px] [&::-webkit-slider-thumb]:appearance-none [&::-webkit-slider-thumb]:rounded-b-[4px] [&::-webkit-slider-thumb]:border [&::-webkit-slider-thumb]:border-[#4e6d9f] [&::-webkit-slider-thumb]:bg-[#e6effb]"
            />
            <ZoomButton label="Zoom in" d="M4.500 8h7M8 4.500v7" />
            <span className="w-[5px]" />
        </div>
    </footer>
)

const App = () => (
    <div className="min-h-screen bg-white font-[Open_Sans,sans-serif] text-[11px]">
        <main className="relative bg-[#bfdbff]">
            <TitleBar />
            <button aria-label="Office menu" className="absolute top-[3px] left-[3px] z-10"><OfficeLogo /></button>
            <TabRow />
            <Ribbon />
            <FormulaBar />
            <div className="flex">
                <Sheet />
                <VerticalScroll />
            </div>
            <SheetBar />
            <StatusBar />
        </main>
    </div>
)

export default App
